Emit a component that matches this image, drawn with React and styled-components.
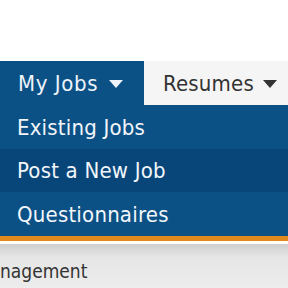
import React from "react";
import styled, { createGlobalStyle } from "styled-components";

const Global = createGlobalStyle`
  html, body { margin: 0; padding: 0; background: #fff; }
  body { font-family: Tahoma, "DejaVu Sans Condensed", "DejaVu Sans", sans-serif; }
`;

const Page = styled.div`
  width: 288px;
  height: 288px;
  overflow: hidden;
  display: flex;
  flex-direction: column;
  background: #fff;
`;

const Spacer = styled.div`
  height: 61px;
  flex: none;
`;

const NavBar = styled.div`
  display: flex;
  height: 44px;
  flex: none;
`;

const Tab = styled.div`
  width: 144px;
  display: flex;
  align-items: center;
  gap: ${(p) => (p.$active ? 11 : 9)}px;
  padding-left: ${(p) => (p.$active ? 18 : 19)}px;
  box-sizing: border-box;
  font-size: 22px;
  letter-spacing: ${(p) => (p.$active ? 0.6 : 0.2)}px;
  color: ${(p) => (p.$active ? "#eef4fa" : "#333")};
  background: ${(p) => (p.$active ? "#0c5186" : "#f5f5f5")};
`;

const Caret = styled.svg`
  width: 14px;
  height: 8px;
  margin-top: 1px;
`;

const Menu = styled.div`
  display: flex;
  flex-direction: column;
  background: #0c5186;
`;

const Item = styled.div`
  height: ${(p) => p.$h}px;
  display: flex;
  align-items: center;
  padding-left: 17px;
  font-size: 22px;
  letter-spacing: 0.2px;
  color: #f2f6fa;
  background: ${(p) => (p.$hover ? "#08467a" : "#0c5186")};
`;

const Orange = styled.div`
  height: 5px;
  background: #e08a1e;
  flex: none;
`;

const Cream = styled.div`
  height: 3px;
  background: #fffdf5;
  flex: none;
`;

const SubBar = styled.div`
  flex: 1;
  background: linear-gradient(#cfcfcf, #e6e6e6 30%, #ececec);
  display: flex;
  align-items: flex-start;
  padding-top: 16px;
  font-size: 19px;
  color: #333;
`;

const CaretIcon = ({ color }) => (
  <Caret viewBox="0 0 14 8">
    <path d="M0 0 H14 L7 8 Z" fill={color} />
  </Caret>
);

export default function App() {
  return (
    <Page>
      <Global />
      <Spacer />
      <NavBar>
        <Tab $active>
          My Jobs <CaretIcon color="#eef4fa" />
        </Tab>
        <Tab>
          Resumes <CaretIcon color="#333" />
        </Tab>
      </NavBar>
      <Menu>
        <Item $h={44}>Existing Jobs</Item>
        <Item $h={43} $hover>Post a New Job</Item>
        <Item $h={44}>Questionnaires</Item>
      </Menu>
      <Orange />
      <Cream />
      <SubBar>nagement</SubBar>
    </Page>
  );
}
